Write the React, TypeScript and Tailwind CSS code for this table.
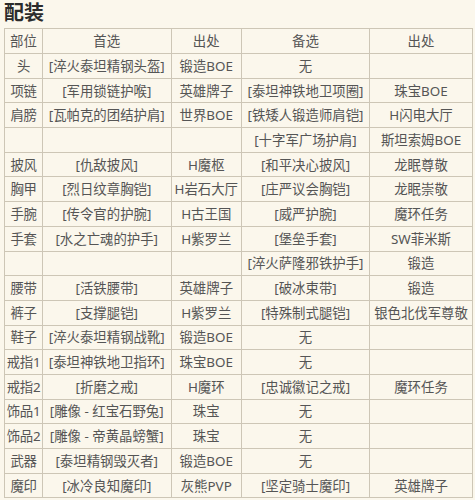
import React from 'react';

type Row = [string, string, string, string, string];

const rows: Row[] = [
  ['头', '[淬火泰坦精钢头盔]', '锻造BOE', '无', ''],
  ['项链', '[军用锁链护喉]', '英雄牌子', '[泰坦神铁地卫项圈]', '珠宝BOE'],
  ['肩膀', '[瓦帕克的团结护肩]', '世界BOE', '[铁矮人锻造师肩铠]', 'H闪电大厅'],
  ['', '', '', '[十字军广场护肩]', '斯坦索姆BOE'],
  ['披风', '[仇敌披风]', 'H魔枢', '[和平决心披风]', '龙眠尊敬'],
  ['胸甲', '[烈日纹章胸铠]', 'H岩石大厅', '[庄严议会胸铠]', '龙眠崇敬'],
  ['手腕', '[传令官的护腕]', 'H古王国', '[威严护腕]', '魔环任务'],
  ['手套', '[水之亡魂的护手]', 'H紫罗兰', '[堡垒手套]', 'SW菲米斯'],
  ['', '', '', '[淬火萨隆邪铁护手]', '锻造'],
  ['腰带', '[活铁腰带]', '英雄牌子', '[破冰束带]', '锻造'],
  ['裤子', '[支撑腿铠]', 'H紫罗兰', '[特殊制式腿铠]', '银色北伐军尊敬'],
  ['鞋子', '[淬火泰坦精钢战靴]', '锻造BOE', '无', ''],
  ['戒指1', '[泰坦神铁地卫指环]', '珠宝BOE', '无', ''],
  ['戒指2', '[折磨之戒]', 'H魔环', '[忠诚徽记之戒]', '魔环任务'],
  ['饰品1', '[雕像 - 红宝石野兔]', '珠宝', '无', ''],
  ['饰品2', '[雕像 - 帝黄晶螃蟹]', '珠宝', '无', ''],
  ['武器', '[泰坦精钢毁灭者]', '锻造BOE', '无', ''],
  ['魔印', '[冰冷良知魔印]', '灰熊PVP', '[坚定骑士魔印]', '英雄牌子'],
];

const cell = 'border border-[#cdc6b6] text-center whitespace-nowrap p-0 overflow-hidden';

export default function App() {
  return (
    <div
      className="w-[475px] h-[500px] bg-[#fbf7ec] overflow-hidden"
      style={{ fontFamily: '"Noto Sans", "Noto Sans CJK SC", sans-serif' }}
    >
      {/* Title */}
      <div className="h-[28px] pl-[4px] pt-[1px] text-[20px] leading-[24px] font-bold text-[#2b2b2b]">
        配装
      </div>

      {/* Table */}
      <table className="ml-[4px] w-[468px] table-fixed border-collapse text-[13.4px] leading-[18px] text-[#555]">
        <colgroup>
          <col className="w-[38px]" />
          <col className="w-[128.5px]" />
          <col className="w-[70.5px]" />
          <col className="w-[128px]" />
          <col className="w-[103px]" />
        </colgroup>
        <thead>
          <tr className="h-[25px]">
            <th className={`${cell} font-normal`}>部位</th>
            <th className={`${cell} font-normal`}>首选</th>
            <th className={`${cell} font-normal`}>出处</th>
            <th className={`${cell} font-normal`}>备选</th>
            <th className={`${cell} font-normal`}>出处</th>
          </tr>
        </thead>
        <tbody>
          {rows.map((r, i) => (
            <tr key={i} className="h-[24.7px]">
              {r.map((c, j) => (
                <td key={j} className={`${cell} ${j === 0 ? 'tracking-[-0.3px]' : ''}`}>
                  {c}
                </td>
              ))}
            </tr>
          ))}
        </tbody>
      </table>
    </div>
  );
}
